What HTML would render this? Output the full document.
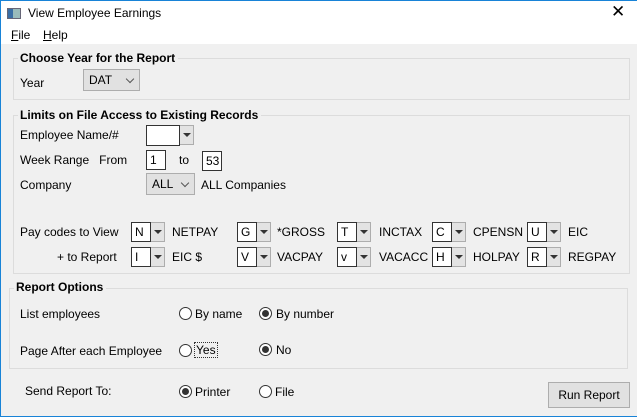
<!DOCTYPE html>
<html><head><style>
*{margin:0;padding:0;box-sizing:border-box}
body{width:637px;height:417px;background:#f0f0f0;font-family:"Liberation Sans",sans-serif;font-size:12px;color:#000;position:relative;overflow:hidden}
.a{position:absolute;white-space:nowrap}
.win{position:absolute;left:0;top:0;width:637px;height:417px;border:1px solid #1883d7;border-right:none}
.grp{position:absolute;border:1px solid #dcdcdc}
.gt{position:absolute;font-weight:bold;background:#f0f0f0;padding:0 3px 0 2px;font-size:12px}
.box{position:absolute;width:20px;height:20px;background:#fff;border:1px solid #333;padding:2px 0 0 3px;font-size:12px}
.arr{position:absolute;width:14px;height:20px;background:#e3e3e3;border:1px solid #adadad;border-left:none}
.arr:after{content:"";position:absolute;left:3px;top:7px;border-left:4px solid transparent;border-right:4px solid transparent;border-top:4px solid #333}
.cmb{position:absolute;height:22px;background:#e1e1e1;border:1px solid #adadad;padding:3px 0 0 5px}
.cmb:after{content:"";position:absolute;right:6px;top:6px;width:5px;height:5px;border-right:1px solid #555;border-bottom:1px solid #555;transform:rotate(45deg)}
.rad{position:absolute;width:13px;height:13px;border:1px solid #333;border-radius:50%;background:#fff}
.rad.on:after{content:"";position:absolute;left:2px;top:2px;width:7px;height:7px;border-radius:50%;background:#333}
</style></head><body>
<div class="a" style="left:0;top:0;width:637px;height:44px;background:#fff"></div>
<div class="win"></div>
<div class="a" style="left:7px;top:8px;width:14px;height:11px;background:linear-gradient(90deg,#3a6ea5 0 40%,#9bb 40% 100%);border:1px solid #667"></div>
<div class="a" style="left:28px;top:6px">View Employee Earnings</div>
<div class="a" style="left:611px;top:2px;font-size:17px;font-weight:300">✕</div>
<div class="a" style="left:11px;top:28px"><u>F</u>ile</div>
<div class="a" style="left:43px;top:28px"><u>H</u>elp</div>

<div class="grp" style="left:13px;top:58px;width:617px;height:42px"></div>
<div class="gt" style="left:18px;top:51px">Choose Year for the Report</div>
<div class="a" style="left:20px;top:76px">Year</div>
<div class="cmb" style="left:83px;top:69px;width:57px">DAT</div>

<div class="grp" style="left:13px;top:115px;width:617px;height:159px"></div>
<div class="gt" style="left:18px;top:108px">Limits on File Access to Existing Records</div>
<div class="a" style="left:20px;top:128px">Employee Name/#</div>
<div class="box" style="left:146px;top:125px;width:34px;height:21px"></div>
<div class="arr" style="left:180px;top:125px;height:20px"></div>
<div class="a" style="left:20px;top:153px">Week Range&nbsp;&nbsp; From</div>
<div class="box" style="left:146px;top:150px">1</div>
<div class="a" style="left:179px;top:153px">to</div>
<div class="box" style="left:202px;top:151px;width:20px">53</div>
<div class="a" style="left:20px;top:178px">Company</div>
<div class="cmb" style="left:146px;top:173px;width:49px">ALL</div>
<div class="a" style="left:201px;top:178px">ALL Companies</div>

<div class="a" style="left:20px;top:225px">Pay codes to View</div>
<div class="a" style="left:57px;top:250px">+ to Report</div>

<div class="box" style="left:131px;top:222px">N</div><div class="arr" style="left:151px;top:222px"></div><div class="a" style="left:172px;top:225px">NETPAY</div>
<div class="box" style="left:237px;top:222px">G</div><div class="arr" style="left:257px;top:222px"></div><div class="a" style="left:277px;top:225px">*GROSS</div>
<div class="box" style="left:337px;top:222px">T</div><div class="arr" style="left:357px;top:222px"></div><div class="a" style="left:379px;top:225px">INCTAX</div>
<div class="box" style="left:432px;top:222px">C</div><div class="arr" style="left:452px;top:222px"></div><div class="a" style="left:473px;top:225px">CPENSN</div>
<div class="box" style="left:527px;top:222px">U</div><div class="arr" style="left:547px;top:222px"></div><div class="a" style="left:568px;top:225px">EIC</div>

<div class="box" style="left:131px;top:247px">I</div><div class="arr" style="left:151px;top:247px"></div><div class="a" style="left:172px;top:250px">EIC $</div>
<div class="box" style="left:237px;top:247px">V</div><div class="arr" style="left:257px;top:247px"></div><div class="a" style="left:277px;top:250px">VACPAY</div>
<div class="box" style="left:337px;top:247px">v</div><div class="arr" style="left:357px;top:247px"></div><div class="a" style="left:379px;top:250px">VACACC</div>
<div class="box" style="left:432px;top:247px">H</div><div class="arr" style="left:452px;top:247px"></div><div class="a" style="left:473px;top:250px">HOLPAY</div>
<div class="box" style="left:527px;top:247px">R</div><div class="arr" style="left:547px;top:247px"></div><div class="a" style="left:568px;top:250px">REGPAY</div>

<div class="grp" style="left:9px;top:288px;width:619px;height:81px"></div>
<div class="gt" style="left:14px;top:280px">Report Options</div>
<div class="a" style="left:20px;top:307px">List employees</div>
<div class="rad" style="left:179px;top:307px"></div><div class="a" style="left:195px;top:307px">By name</div>
<div class="rad on" style="left:259px;top:307px"></div><div class="a" style="left:276px;top:307px">By number</div>
<div class="a" style="left:20px;top:344px">Page After each Employee</div>
<div class="rad" style="left:179px;top:344px"></div><div class="a" style="left:194px;top:342px;border:1px dotted #333;padding:0 1px">Yes</div>
<div class="rad on" style="left:259px;top:343px"></div><div class="a" style="left:276px;top:343px">No</div>

<div class="a" style="left:25px;top:384px">Send Report To:</div>
<div class="rad on" style="left:179px;top:385px"></div><div class="a" style="left:195px;top:385px">Printer</div>
<div class="rad" style="left:259px;top:385px"></div><div class="a" style="left:275px;top:385px">File</div>
<div class="a" style="left:548px;top:382px;width:82px;height:26px;background:#e1e1e1;border:1px solid #adadad;text-align:center;line-height:24px">Run Report</div>
</body></html>
